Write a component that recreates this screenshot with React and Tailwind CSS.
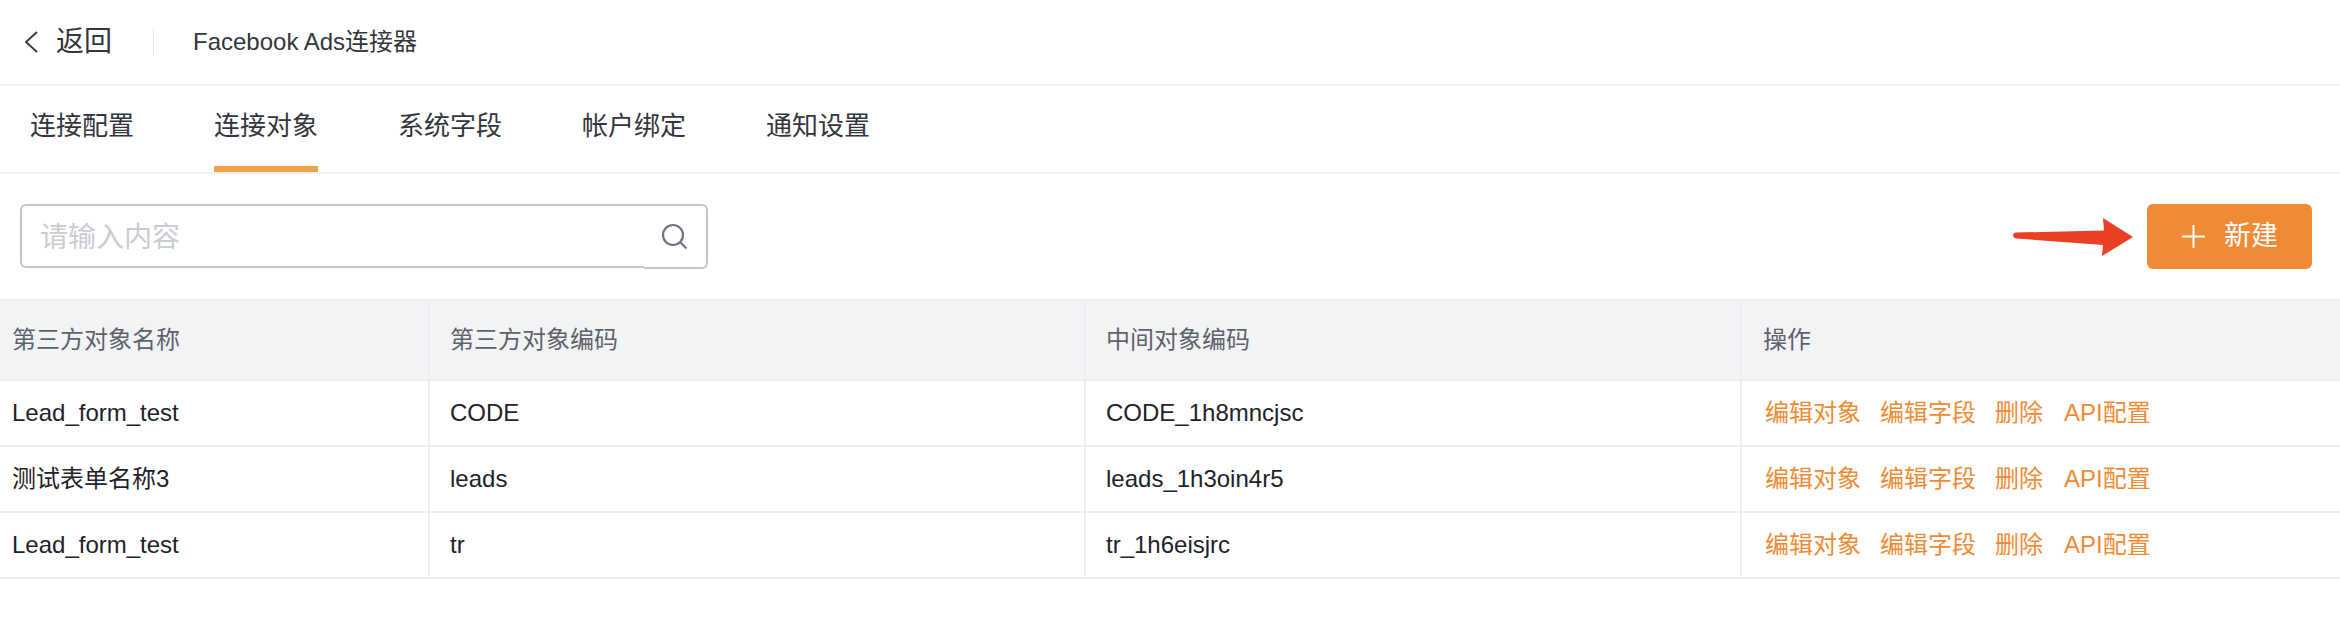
import React from "react";

const FONT = "font-['Liberation_Sans','Noto_Sans_CJK_SC',sans-serif]";

const tabs = ["连接配置", "连接对象", "系统字段", "帐户绑定", "通知设置"];
const rows = [
  { name: "Lead_form_test", code: "CODE", mid: "CODE_1h8mncjsc" },
  { name: "测试表单名称3", code: "leads", mid: "leads_1h3oin4r5" },
  { name: "Lead_form_test", code: "tr", mid: "tr_1h6eisjrc" },
];

const ArrowMark = () => (
  <svg width="120" height="38" viewBox="0 0 120 38" className="block">
    <path
      d="M3 14.5 L91 12.5 L90 0 L120 19 L89 38 L90 27 L3 20.5 C-1 20 -1 14.6 3 14.5 Z"
      fill="#ea4125"
    />
  </svg>
);

const BackIcon = () => (
  <svg width="16" height="24" viewBox="0 0 16 24" fill="none" stroke="#33363d" strokeWidth="1.8" className="block">
    <path d="M14 2 L3 12 L14 22" />
  </svg>
);

const SearchIcon = () => (
  <svg width="27" height="27" viewBox="0 0 27 27" fill="none" stroke="#6d7482" strokeWidth="2.2" className="block">
    <circle cx="12" cy="12" r="10" />
    <path d="M19.5 19.5 L25.5 25.5" />
  </svg>
);

const PlusIcon = () => (
  <svg width="23" height="23" viewBox="0 0 23 23" fill="none" stroke="#ffffff" strokeWidth="2" className="block">
    <path d="M11.5 0 V23 M0 11.5 H23" />
  </svg>
);

const App = () => {
  return (
    <div className={`${FONT} w-[2340px] h-[642px] bg-white overflow-hidden`}>
      {/* Header */}
      <div className="h-[86px] border-b-2 border-[#f2f3f5] flex items-center pl-[23px]">
        <BackIcon />
        <span className="ml-[17px] text-[28px] text-[#33363d]">返回</span>
        <div className="ml-[41px] w-px h-[27px] bg-[#e5e6ea]" />
        <span className="ml-[39px] text-[24px] text-[#33363d]">Facebook Ads连接器</span>
      </div>

      {/* Tabs */}
      <div className="h-[88px] border-b-2 border-[#f2f3f5] flex gap-[80px] pl-[30px]">
        {tabs.map((tab, i) => (
          <div
            key={tab}
            className={
              "h-[86px] flex items-center text-[26px] text-[#33363d] border-b-[6px] " +
              (i === 1 ? "border-[#f3a145]" : "border-transparent")
            }
          >
            {tab}
          </div>
        ))}
      </div>

      {/* Toolbar */}
      <div className="h-[125px] flex items-start justify-between pt-[30px] pl-[20px] pr-[28px]">
        <div className="flex items-start">
          <div className="w-[624px] h-[64px] border-2 border-r-0 border-[#c3c6cf] rounded-l-[6px] flex items-center pl-[18px] pt-[4px]">
            <span className="text-[28px] text-[#c9ccd3]">请输入内容</span>
          </div>
          <div className="w-[64px] h-[65px] border-2 border-l-0 border-[#c3c6cf] rounded-r-[6px] flex items-center justify-end pr-[18px]">
            <SearchIcon />
          </div>
        </div>
        <div className="flex items-center gap-[14px]">
          <ArrowMark />
          <button className="w-[165px] h-[65px] bg-[#f18a35] rounded-[6px] flex items-center justify-center gap-[19px] pl-[1px] text-[27px] text-white">
            <PlusIcon />
            新建
          </button>
        </div>
      </div>

      {/* Table */}
      <div className="border-t-2 border-[#eceef2]">
        <div className="grid grid-cols-[430px_656px_656px_598px] h-[80px] bg-[#f2f3f5] border-b-2 border-[#eceef2] text-[24px] text-[#5f626b]">
          <div className="flex items-center pl-[12px] border-r-2 border-[#eceef2]">第三方对象名称</div>
          <div className="flex items-center pl-[20px] border-r-2 border-[#eceef2]">第三方对象编码</div>
          <div className="flex items-center pl-[20px] border-r-2 border-[#eceef2]">中间对象编码</div>
          <div className="flex items-center pl-[21px]">操作</div>
        </div>
        {rows.map((row, i) => (
          <div
            key={i}
            className="grid grid-cols-[430px_656px_656px_598px] h-[66px] border-b-2 border-[#eceef2] text-[24px] text-[#1f2229]"
          >
            <div className="flex items-center pl-[12px] border-r-2 border-[#eceef2]">{row.name}</div>
            <div className="flex items-center pl-[20px] border-r-2 border-[#eceef2]">{row.code}</div>
            <div className="flex items-center pl-[20px] border-r-2 border-[#eceef2]">{row.mid}</div>
            <div className="flex items-center pl-[23px] text-[#f18a35]">
              <span>编辑对象</span>
              <span className="ml-[19px]">编辑字段</span>
              <span className="ml-[19px]">删除</span>
              <span className="ml-[21px]">API配置</span>
            </div>
          </div>
        ))}
      </div>
    </div>
  );
};

export default App;
